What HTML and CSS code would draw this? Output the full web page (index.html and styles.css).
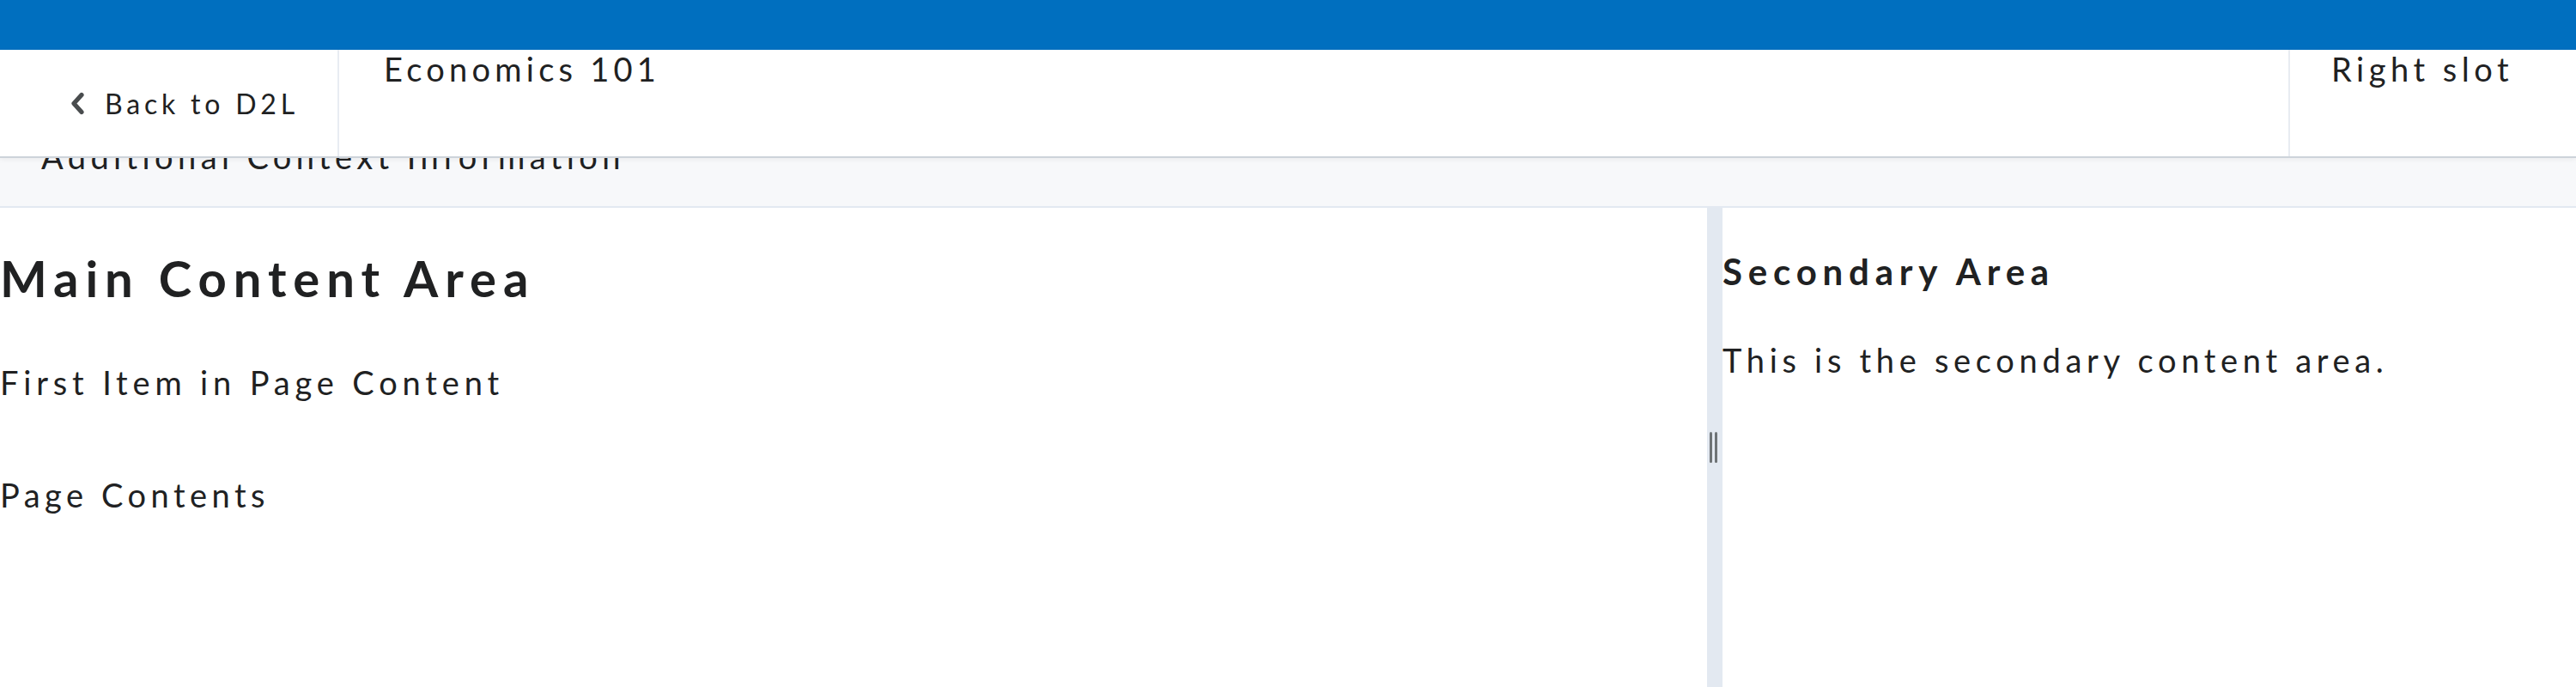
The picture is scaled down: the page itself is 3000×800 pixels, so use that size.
FILE: index.html
```html
<!DOCTYPE html>
<html lang="en">
<head>
<meta charset="utf-8">
<title>Economics 101</title>
<link rel="stylesheet" href="styles.css">
</head>
<body>
<div class="topbar"></div>
<header class="header">
  <div class="back">
    <svg class="chev" width="18" height="27" viewBox="0 0 18 27" aria-hidden="true">
      <path d="M14 3.5 L5 13.5 L14 23.5" fill="none" stroke="#494c4e" stroke-width="5.2" stroke-linecap="round" stroke-linejoin="round"/>
    </svg>
    <span class="back-text">Back to D2L</span>
  </div>
  <div class="title">Economics 101</div>
  <div class="right">Right slot</div>
</header>
<div class="context"><div class="context-text">Additional Context Information</div></div>
<main class="columns">
  <section class="primary">
    <h1 class="h1">Main Content Area</h1>
    <p class="first">First Item in Page Content</p>
    <p class="contents">Page Contents</p>
  </section>
  <div class="divider">
    <div class="handle"><span class="grip"></span><span class="grip"></span></div>
  </div>
  <aside class="secondary">
    <h2 class="h2">Secondary Area</h2>
    <p class="sec-text">This is the secondary content area.</p>
  </aside>
</main>
</body>
</html>
```
FILE: styles.css
```css
html, body {
  margin: 0;
  padding: 0;
  background: #ffffff;
}
body {
  font-family: Lato, "Open Sans", sans-serif;
  color: #202122;
  overflow: hidden;
}
.topbar {
  height: 58px;
  background: #006fbf;
}
.header {
  position: relative;
  z-index: 2;
  display: flex;
  height: 124px;
  background: #ffffff;
  border-bottom: 2px solid #cdd3da;
  box-shadow: 0 2px 6px rgba(0, 0, 0, 0.05);
}
.back {
  box-sizing: border-box;
  width: 395px;
  flex: none;
  display: flex;
  align-items: center;
  padding-left: 81px;
  border-right: 2px solid #e8ecf2;
  font-size: 32px;
  letter-spacing: 0.15em;
}
.chev {
  display: block;
  margin-right: 23px;
  flex: none;
}
.title {
  flex: 1;
  padding-left: 52px;
  font-size: 38px;
  line-height: 1.2;
  letter-spacing: 0.138em;
}
.right {
  box-sizing: border-box;
  width: 335px;
  flex: none;
  padding-left: 48px;
  border-left: 2px solid #e8ecf2;
  font-size: 38px;
  line-height: 1.2;
  letter-spacing: 0.145em;
}
.context {
  height: 56px;
  overflow: hidden;
  background: #f7f8fa;
  border-bottom: 2px solid #e3e9f1;
}
.context-text {
  margin-top: -24px;
  padding-left: 48px;
  font-size: 38px;
  line-height: 1.2;
  letter-spacing: 0.142em;
}
.columns {
  display: grid;
  grid-template-columns: 1988px 18px 1fr;
  height: 558px;
}
.primary, .secondary {
  min-width: 0;
}
.h1 {
  margin: 47px 0 0;
  font-size: 58px;
  font-weight: 700;
  line-height: 1.2;
  letter-spacing: 0.137em;
}
.first {
  margin: 64px 0 0;
  font-size: 38px;
  line-height: 1.2;
  letter-spacing: 0.154em;
}
.contents {
  margin: 86px 0 0;
  font-size: 38px;
  line-height: 1.2;
  letter-spacing: 0.145em;
}
.divider {
  background: #e3e9f1;
  display: flex;
  align-items: center;
  justify-content: center;
}
.handle {
  display: flex;
  gap: 3px;
  margin-left: -4px;
}
.grip {
  display: block;
  width: 3px;
  height: 36px;
  border-radius: 2px;
  background: #6e7376;
}
.h2 {
  margin: 49px 0 0;
  font-size: 42px;
  font-weight: 700;
  line-height: 1.2;
  letter-spacing: 0.162em;
}
.sec-text {
  margin: 56px 0 0;
  font-size: 38px;
  line-height: 1.2;
  letter-spacing: 0.15em;
}
```
